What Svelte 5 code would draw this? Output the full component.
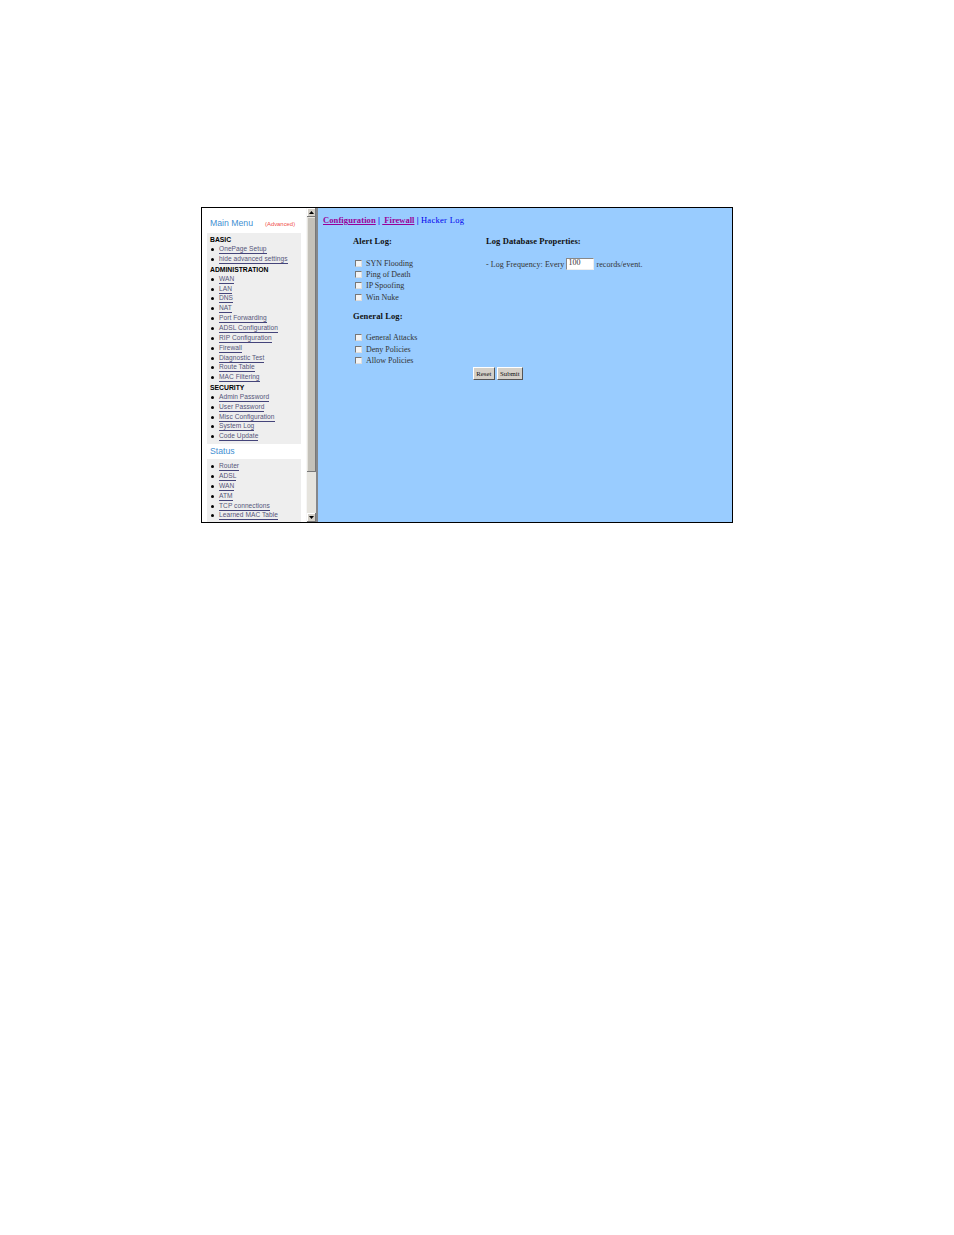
<script>
	const menu = [
		{ title: 'BASIC', links: ['OnePage Setup', 'hide advanced settings'] },
		{ title: 'ADMINISTRATION', links: ['WAN', 'LAN', 'DNS', 'NAT', 'Port Forwarding', 'ADSL Configuration', 'RIP Configuration', 'Firewall', 'Diagnostic Test', 'Route Table', 'MAC Filtering'] },
		{ title: 'SECURITY', links: ['Admin Password', 'User Password', 'Misc Configuration', 'System Log', 'Code Update'] }
	];
	const status = ['Router', 'ADSL', 'WAN', 'ATM', 'TCP connections', 'Learned MAC Table'];
	const alertLog = ['SYN Flooding', 'Ping of Death', 'IP Spoofing', 'Win Nuke'];
	const generalLog = ['General Attacks', 'Deny Policies', 'Allow Policies'];
</script>

<div class="frame">
	<aside class="side">
		<div class="side-head">
			<span class="side-title">Main Menu</span>
			<span class="advanced">(Advanced)</span>
		</div>
		<div class="panel">
			{#each menu as group}
				<div class="group">{group.title}</div>
				{#each group.links as link}
					<div class="item"><span class="dot"></span><a href="#top">{link}</a></div>
				{/each}
			{/each}
		</div>
		<div class="side-title status-title">Status</div>
		<div class="panel status">
			{#each status as link}
				<div class="item"><span class="dot"></span><a href="#top">{link}</a></div>
			{/each}
		</div>
	</aside>

	<div class="scrollbar">
		<div class="arrow"><svg width="7" height="5" viewBox="0 0 7 5"><path d="M3.5 1 L6 4 H1 Z" fill="#000" /></svg></div>
		<div class="thumb"></div>
		<div class="track"></div>
		<div class="arrow"><svg width="7" height="5" viewBox="0 0 7 5"><path d="M1 1 H6 L3.5 4 Z" fill="#000" /></svg></div>
	</div>

	<main class="main">
		<div class="crumbs">
			<a class="visited" href="#top">Configuration</a>
			<span class="sep">|</span>
			<a class="visited second-link" href="#top">&nbsp;Firewall</a>
			<span class="sep">|</span>
			<span class="current">Hacker Log</span>
		</div>

		<div class="columns">
			<div class="col-left">
				<h4>Alert Log:</h4>
				<div class="checks">
					{#each alertLog as label}
						<label class="check"><span class="box"></span>{label}</label>
					{/each}
				</div>
				<h4 class="general">General Log:</h4>
				<div class="checks second">
					{#each generalLog as label}
						<label class="check"><span class="box"></span>{label}</label>
					{/each}
				</div>
			</div>
			<div class="col-right">
				<h4>Log Database Properties:</h4>
				<div class="freq">
					- Log Frequency: Every <span class="field">100</span> records/event.
				</div>
			</div>
		</div>

		<div class="buttons">
			<span class="btn">Reset</span>
			<span class="btn">Submit</span>
		</div>
	</main>
</div>

<style>
	:global(body) {
		margin: 0;
		background: #fff;
	}

	.frame {
		box-sizing: border-box;
		display: flex;
		width: 532px;
		height: 316px;
		margin: 207px 0 712px 201px;
		border: 1px solid #000;
		overflow: hidden;
	}

	/* sidebar */
	.side {
		box-sizing: border-box;
		flex: 0 0 104px;
		height: 314px;
		padding: 10px 5px 0 5px;
		overflow: hidden;
		font-family: "Liberation Sans", Arial, sans-serif;
	}

	.side-head {
		display: flex;
		align-items: baseline;
		height: 15px;
		padding-left: 3px;
	}

	.side-title {
		font-size: 8.7px;
		color: #3f8fd2;
	}

	.advanced {
		margin-left: 12px;
		font-size: 5.9px;
		color: #f0504a;
	}

	.panel {
		background: #eee;
		padding: 2px 3px 2px;
	}

	.group {
		height: 9.85px;
		line-height: 9.85px;
		font-size: 6.8px;
		font-weight: bold;
		color: #000;
	}

	.item {
		display: flex;
		align-items: center;
		height: 9.85px;
		font-size: 6.6px;
		letter-spacing: 0.05px;
	}

	.dot {
		flex: none;
		width: 3px;
		height: 3px;
		margin: 0 5px 0 1px;
		border-radius: 50%;
		background: #000;
	}

	.item a {
		color: #55557a;
		line-height: 8px;
		text-decoration: none;
		border-bottom: 1px solid #44447a;
	}

	.status-title {
		height: 15px;
		line-height: 15px;
		padding: 0 0 0 3px;
	}

	.status {
		padding-top: 3px;
	}

	/* scrollbar */
	.scrollbar {
		box-sizing: border-box;
		flex: 0 0 12px;
		display: flex;
		flex-direction: column;
		background: #e6e4de;
		border-left: 1px solid #f6f6f6;
		border-right: 2px solid #85878a;
	}

	.arrow {
		flex: none;
		display: flex;
		align-items: center;
		justify-content: center;
		height: 9px;
		background: #d4d0c8;
		box-shadow: inset -1px -1px 0 #777, inset 1px 1px 0 #fff;
	}

	.thumb {
		flex: none;
		height: 255px;
		background: #c4c1b9;
		box-shadow: inset -1px -1px 0 #777, inset 1px 1px 0 #e6e4de;
	}

	.track {
		flex: 1;
	}

	/* main form */
	.main {
		flex: 1;
		background: #99ccff;
		font-family: "Liberation Serif", "Times New Roman", serif;
		font-size: 8px;
		color: #333;
		padding: 6px 0 0 5px;
	}

	.crumbs {
		height: 12px;
		line-height: 12px;
		font-weight: bold;
		font-size: 8.5px;
		letter-spacing: 0.1px;
	}

	.crumbs a.visited {
		color: #990099;
	}

	.crumbs a.second-link {
		letter-spacing: 0;
	}

	.sep {
		color: #0000ee;
	}

	.current {
		color: #0000ee;
		font-weight: normal;
		letter-spacing: 0.3px;
	}

	.columns {
		display: flex;
		margin-top: 10px;
		padding-left: 30px;
	}

	.col-left {
		width: 133px;
	}

	h4 {
		margin: 0;
		height: 11px;
		line-height: 11px;
		font-size: 8.5px;
		letter-spacing: 0.1px;
		font-weight: bold;
		color: #111;
	}

	.checks {
		margin-top: 11px;
	}

	.checks.second {
		margin-top: 10.5px;
	}

	.general {
		margin-top: 8px;
	}

	.check {
		display: flex;
		align-items: center;
		height: 11.2px;
		margin-left: 2px;
	}

	.box {
		flex: none;
		box-sizing: border-box;
		width: 7px;
		height: 7px;
		margin-right: 4px;
		background: #f4f4f4;
		border: 1px solid #777;
		border-right-color: #ddd;
		border-bottom-color: #ddd;
	}

	.freq {
		display: flex;
		align-items: center;
		gap: 2px;
		margin-top: 11px;
		height: 12px;
		letter-spacing: 0.08px;
	}

	.field {
		box-sizing: border-box;
		display: inline-block;
		width: 28px;
		height: 12px;
		line-height: 7px;
		padding-left: 1px;
		background: #fff;
		border: 1px solid #888;
		border-right-color: #eee;
		border-bottom-color: #eee;
		font-size: 8px;
	}

	.buttons {
		display: flex;
		gap: 2px;
		margin: 1px 0 0 150px;
	}

	.btn {
		box-sizing: border-box;
		height: 13px;
		line-height: 11px;
		padding: 0 2.3px;
		font-size: 6.8px;
		background: #d4d0c8;
		border: 1px solid;
		border-color: #fff #555 #555 #fff;
		color: #111;
	}
</style>
